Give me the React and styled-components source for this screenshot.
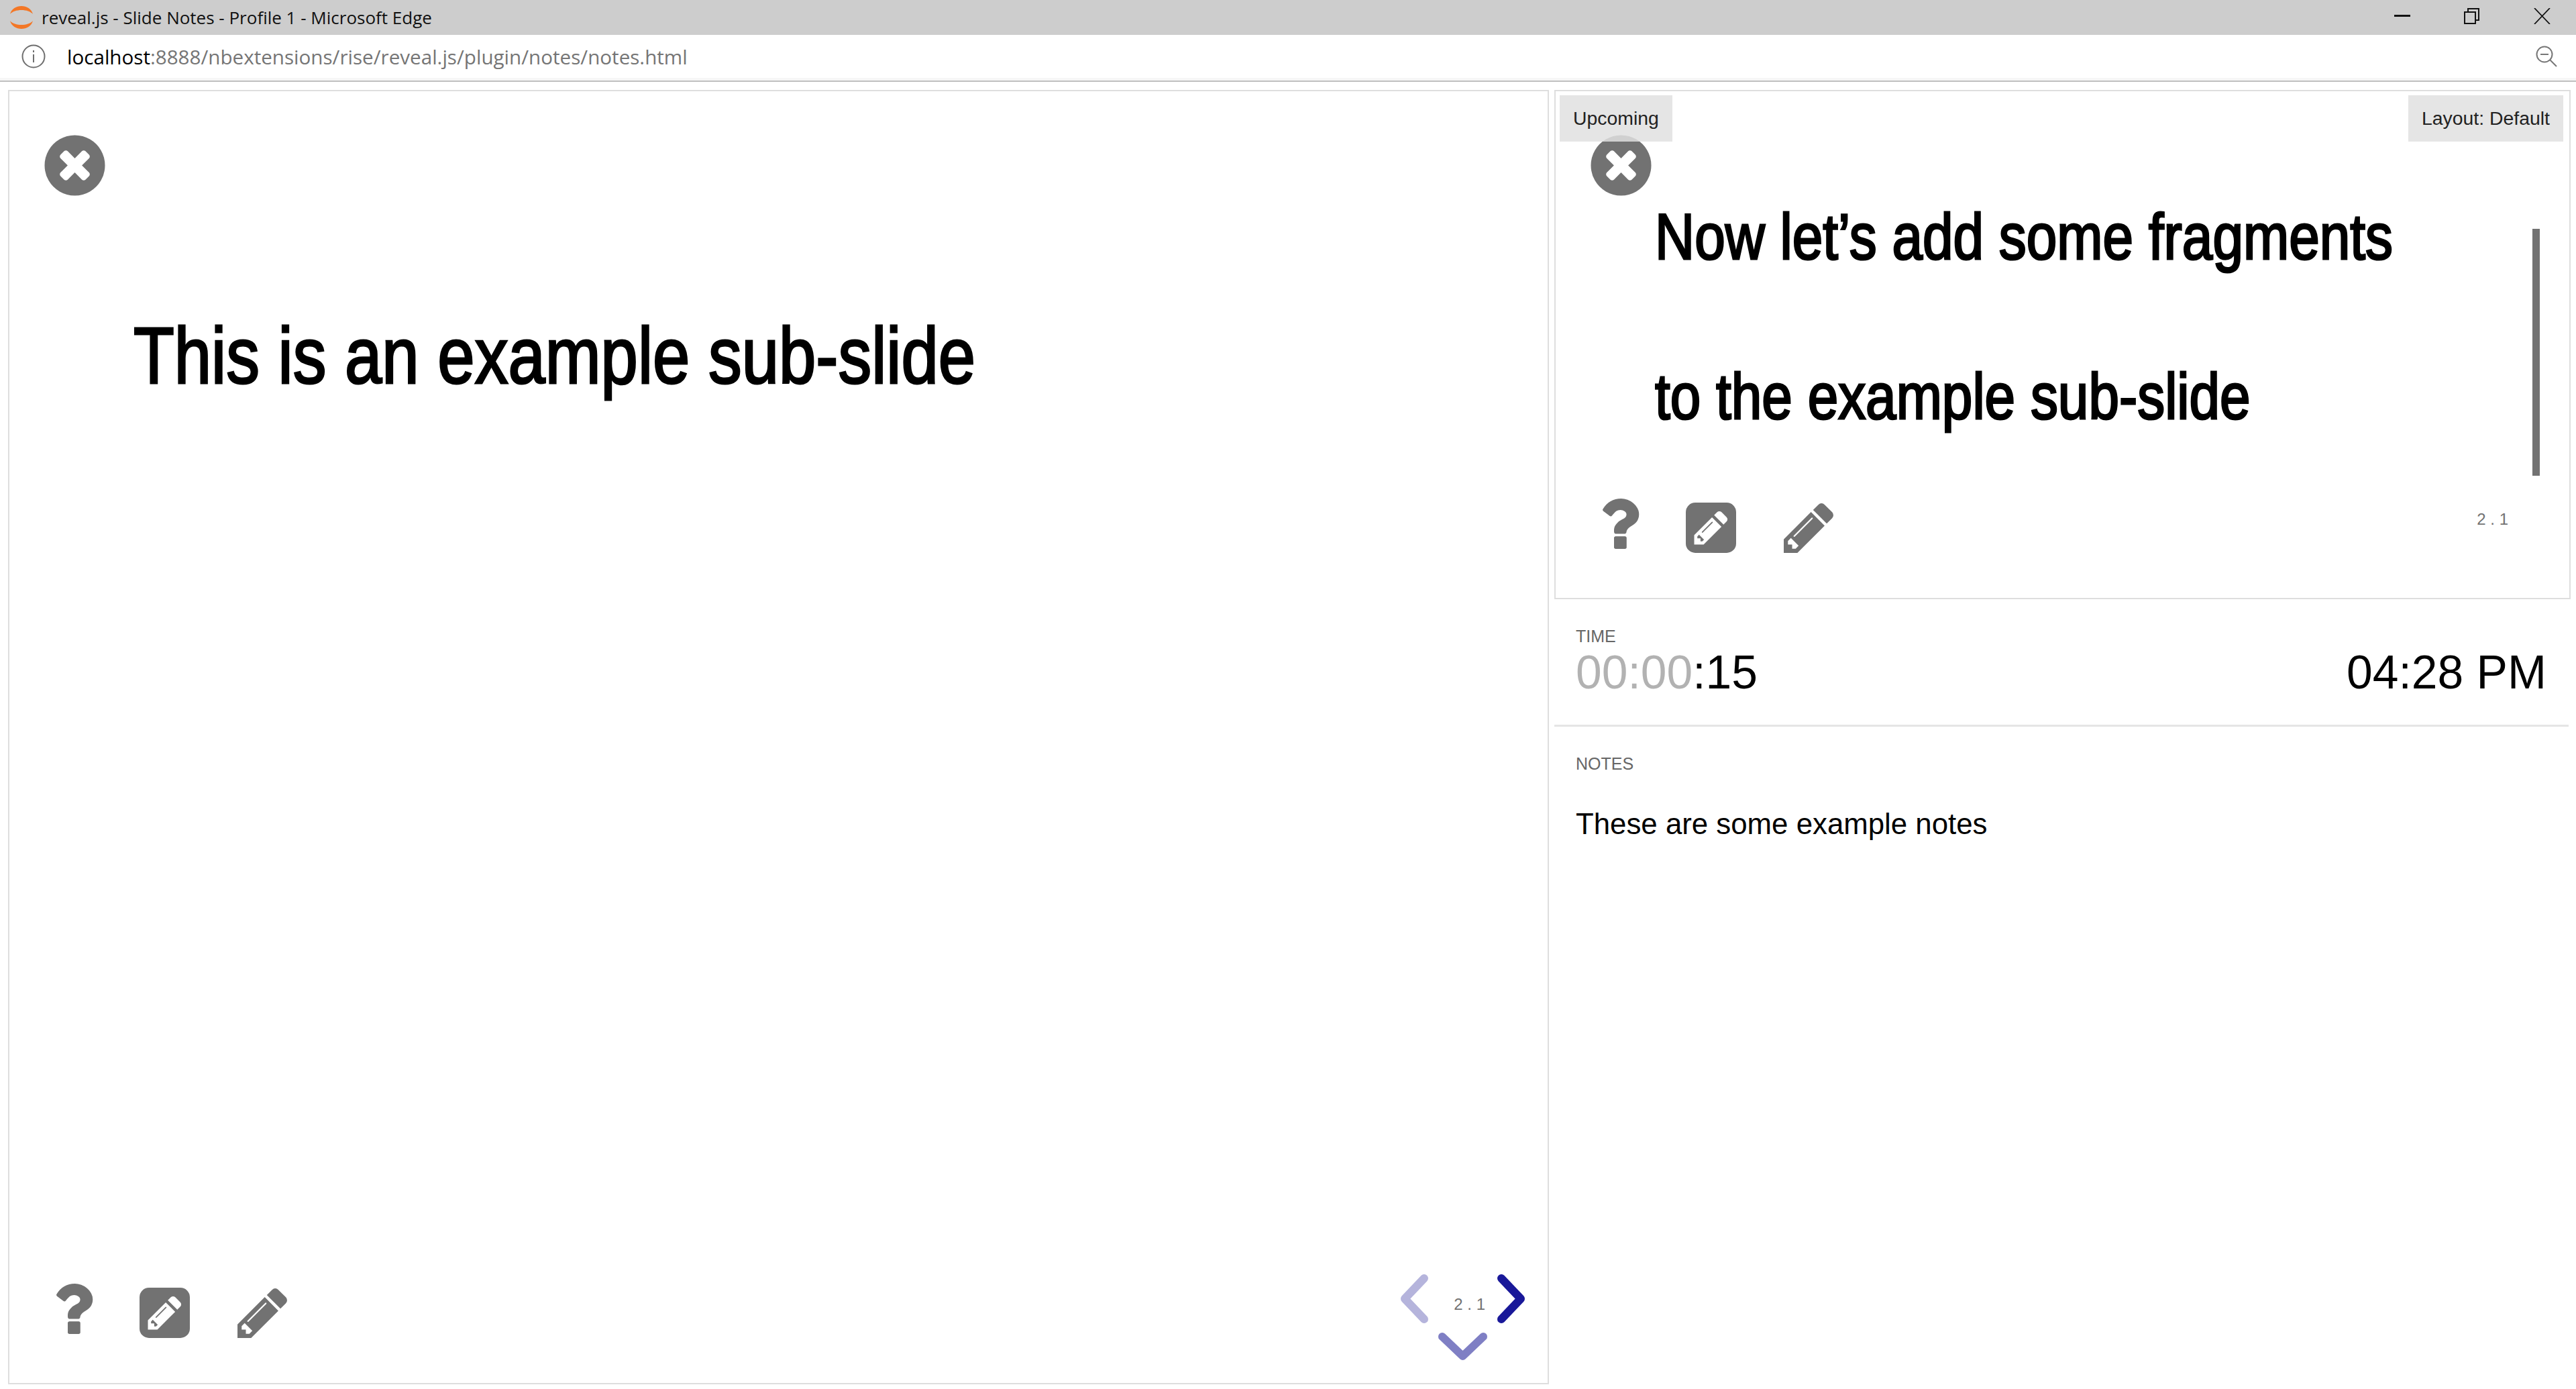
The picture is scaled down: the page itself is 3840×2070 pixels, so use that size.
import React from "react";
import styled, { createGlobalStyle } from "styled-components";

const GlobalStyle = createGlobalStyle`
  html, body {
    margin: 0;
    padding: 0;
    background: #ffffff;
  }
`;

// font awesome 4 glyph outlines
const CLOSE =
  "M1277 1122q0-26-19-45l-181-181 181-181q19-19 19-45 0-27-19-46l-90-90q-19-19-46-19-26 0-45 19l-181 181-181-181q-19-19-45-19-27 0-46 19l-90 90q-19 19-19 46 0 26 19 45l181 181-181 181q-19 19-19 45 0 27 19 46l90 90q19 19 46 19 26 0 45-19l181-181 181 181q19 19 45 19 27 0 46-19l90-90q19-19 19-46zm387-226q0 209-103 385.5t-279.5 279.5-385.5 103-385.5-103-279.5-279.5-103-385.5 103-385.5 279.5-279.5 385.5-103 385.5 103 279.5 279.5 103 385.5z";
const QUESTION =
  "M1088 1256v240q0 16-12 28t-28 12h-240q-16 0-28-12t-12-28v-240q0-16 12-28t28-12h240q16 0 28 12t12 28zm316-600q0 54-15.5 101t-35 76.5-55 59.5-57.5 43.5-61 35.5q-41 23-68.5 65t-27.5 67q0 17-12 32.5t-28 15.5h-240q-15 0-25.5-18.5t-10.5-37.5v-45q0-83 65-156.5t143-108.5q59-27 84-56t25-76q0-42-46.5-74t-107.5-32q-65 0-108 29-35 25-107 115-13 16-31 16-12 0-25-8l-164-125q-13-10-15.5-25t5.5-28q160-266 464-266 80 0 161 31t146 83 106 127.5 41 158.5z";
const SQUARE =
  "M404 980l152 152-52 52h-56v-96h-96v-56zm414-390q14 13-3 30l-291 291q-17 17-30 3-14-13 3-30l291-291q17-17 30-3zm-274 690l544-544-288-288-544 544v288h288zm608-608l92-92q28-28 28-68t-28-68l-152-152q-28-28-68-28t-68 28l-92 92zm384-384v960q0 119-84.5 203.5t-203.5 84.5h-960q-119 0-203.5-84.5t-84.5-203.5v-960q0-119 84.5-203.5t203.5-84.5h960q119 0 203.5 84.5t84.5 203.5z";
const PENCIL =
  "M363 1408l91-91-235-235-91 91v107h128v128h107zm523-928q0-22-22-22-10 0-17 7l-542 542q-7 7-7 17 0 22 22 22 10 0 17-7l542-542q7-7 7-17zm-54-192l416 416-832 832h-416v-416zm683 96q0 53-37 90l-166 166-416-416 166-165q36-38 90-38 53 0 91 38l235 234q37 39 37 91z";

const Glyph = ({ d, box, size }) => (
  <svg width={size} height={size} viewBox={box} fill="#727272" style={{ display: "block", flex: "none" }}>
    <path d={d} />
  </svg>
);

function SlideOverlay({ number }) {
  return (
    <>
      <CloseButton>
        <Glyph d={CLOSE} box="0 0 1792 1792" size={105} />
      </CloseButton>
      <ToolRow>
        <QuestionSlot>
          <Glyph d={QUESTION} box="0 0 1792 1792" size={105} />
        </QuestionSlot>
        <Glyph d={SQUARE} box="0 0 1536 1536" size={75} />
        <Glyph d={PENCIL} box="0 0 1536 1536" size={75} />
      </ToolRow>
      <SlideNumber>{number}</SlideNumber>
    </>
  );
}

export default function App() {
  return (
    <Page>
      <GlobalStyle />
      <TitleBar>
        <AppTitle>
          <svg width="36" height="36" viewBox="0 0 36 36">
            <path d="M1 13C5-3 31-3 35 13 28 5 8 5 1 13Z" fill="#f37726" />
            <path d="M1 23C5 39 31 39 35 23 28 31 8 31 1 23Z" fill="#f37726" />
          </svg>
          reveal.js - Slide Notes - Profile 1 - Microsoft Edge
        </AppTitle>
        <WindowControls>
          <svg width="24" height="24" viewBox="0 0 24 24">
            <path d="M0 11.5H24" stroke="#111" strokeWidth="3" fill="none" />
          </svg>
          <svg width="24" height="24" viewBox="0 0 24 24">
            <path d="M6 6V1H22V18H17M1 6H17V23H1Z" stroke="#111" strokeWidth="2" fill="none" />
          </svg>
          <svg width="25" height="24" viewBox="0 0 25 24">
            <path d="M1 0L24 24M24 0L1 24" stroke="#111" strokeWidth="1.8" fill="none" />
          </svg>
        </WindowControls>
      </TitleBar>
      <AddressBar>
        <svg width="36" height="36" viewBox="0 0 36 36">
          <circle cx="18" cy="18" r="16.5" fill="none" stroke="#6f6f6f" strokeWidth="2" />
          <path d="M18 15V27M18 9V12" stroke="#6f6f6f" strokeWidth="2" fill="none" />
        </svg>
        <Url>
          localhost<UrlRest>:8888/nbextensions/rise/reveal.js/plugin/notes/notes.html</UrlRest>
        </Url>
        <svg width="32" height="32" viewBox="0 0 32 32">
          <circle cx="13" cy="13" r="11.5" fill="none" stroke="#777" strokeWidth="2" />
          <path d="M7 13H19M21 21L31 31" stroke="#777" strokeWidth="2" fill="none" />
        </svg>
      </AddressBar>
      <Workspace>
        <CurrentSlide>
          <SlideOverlay number="2 . 1" />
          <CurrentHeading>This is an example sub-slide</CurrentHeading>
          <NavArrows>
            <svg width="200" height="145" viewBox="0 0 200 145">
              <path d="M43 15L14 45.5L43 76" stroke="#b5b4dc" />
              <path d="M158 15L187 45.5L158 76" stroke="#191899" />
              <path d="M70 102L100.5 131L131 102" stroke="#7f7fc4" />
            </svg>
          </NavArrows>
        </CurrentSlide>
        <SidePanel>
          <UpcomingSlide>
            <SlideOverlay number="2 . 1" />
            <CornerLabels>
              <CornerLabel>Upcoming</CornerLabel>
              <CornerLabel>Layout: Default</CornerLabel>
            </CornerLabels>
            <UpcomingHeading>
              Now let’s add some fragments
              <br />
              to the example sub-slide
            </UpcomingHeading>
            <ScrollBar />
          </UpcomingSlide>
          <TimeSection>
            <SectionLabel>TIME</SectionLabel>
            <TimeRow>
              <span>
                <Muted>00:00</Muted>:15
              </span>
              <span>04:28 PM</span>
            </TimeRow>
          </TimeSection>
          <NotesSection>
            <SectionLabel>NOTES</SectionLabel>
            <NotesText>These are some example notes</NotesText>
          </NotesSection>
        </SidePanel>
      </Workspace>
    </Page>
  );
}

const Page = styled.div`
  width: 3840px;
  height: 2070px;
  display: flex;
  flex-direction: column;
  overflow: hidden;
  background: #ffffff;
  font-family: "Liberation Sans", Arial, sans-serif;
`;

const TitleBar = styled.div`
  height: 52px;
  flex: none;
  box-sizing: border-box;
  display: flex;
  align-items: center;
  justify-content: space-between;
  padding: 0 38px 0 14px;
  background: #cdcdcd;
`;

const AppTitle = styled.div`
  display: flex;
  align-items: center;
  gap: 12px;
  font-family: "Open Sans", sans-serif;
  font-size: 26px;
  color: #111111;
`;

const WindowControls = styled.div`
  align-self: flex-start;
  display: flex;
  gap: 80px;
  padding-top: 12px;
`;

const AddressBar = styled.div`
  height: 70px;
  flex: none;
  box-sizing: border-box;
  display: flex;
  align-items: center;
  gap: 32px;
  padding: 0 28px 4px 32px;
  background: #ffffff;
  border-bottom: 2px solid #c0c0c0;
  box-shadow: inset 0 -4px 0 #f6f6f6;
`;

const Url = styled.div`
  flex: 1;
  font-family: "Open Sans", sans-serif;
  font-size: 29.6px;
  color: #000000;
`;

const UrlRest = styled.span`
  color: #757575;
`;

const Workspace = styled.div`
  flex: 1;
  display: flex;
  gap: 8px;
  padding: 12px 8px 7px 12px;
  min-height: 0;
`;

const Slide = styled.div`
  position: relative;
  box-sizing: border-box;
  border: 2px solid #dedede;
  background: #ffffff;
  color: #000000;
`;

const CurrentSlide = styled(Slide)`
  width: 2297px;
  flex: none;
  padding: 335px 0 0 185px;
`;

const Heading = styled.h1`
  margin: 0;
  font-weight: 400;
  white-space: nowrap;
  transform-origin: left center;
  -webkit-text-stroke: 3px #000000;
`;

const CurrentHeading = styled(Heading)`
  font-size: 118px;
  line-height: 1;
  transform: scaleX(0.843);
`;

const CloseButton = styled.div`
  position: absolute;
  left: 45px;
  top: 58px;
`;

const ToolRow = styled.div`
  position: absolute;
  left: 69px;
  bottom: 67px;
  display: flex;
  align-items: flex-end;
  gap: 71px;
`;

const QuestionSlot = styled.div`
  width: 54px;
  height: 75px;
  margin-left: -2px;
  margin-right: 2px;
  display: flex;
  justify-content: center;
  align-items: flex-end;
  svg {
    margin-bottom: -9px;
  }
`;

const SlideNumber = styled.div`
  position: absolute;
  right: ${(p) => p.$right || 93}px;
  bottom: 105px;
  font-size: 24px;
  line-height: 25px;
  color: #727272;
`;

const NavArrows = styled.div`
  position: absolute;
  right: 27px;
  bottom: 26px;
  line-height: 0;
  path {
    fill: none;
    stroke-width: 12px;
    stroke-linecap: round;
    stroke-linejoin: round;
  }
`;

const SidePanel = styled.div`
  flex: 1;
  display: flex;
  flex-direction: column;
  min-width: 0;
`;

const UpcomingSlide = styled(Slide)`
  height: 759px;
  flex: none;
  padding: 98px 0 0 148px;
  ${SlideNumber} {
    right: 91px;
  }
`;

const CornerLabels = styled.div`
  position: absolute;
  top: 6px;
  left: 6px;
  right: 9px;
  display: flex;
  justify-content: space-between;
`;

const CornerLabel = styled.div`
  padding: 20px;
  font-size: 28.4px;
  line-height: 29px;
  color: #222222;
  background: rgba(224, 224, 224, 0.85);
`;

const UpcomingHeading = styled(Heading)`
  font-size: 96px;
  line-height: 238px;
  transform: scaleX(0.853);
`;

const ScrollBar = styled.div`
  position: absolute;
  top: 205px;
  right: 44px;
  width: 11px;
  height: 368px;
  background: #727272;
`;

const TimeSection = styled.section`
  height: 190px;
  flex: none;
  box-sizing: border-box;
  padding: 43px 33px 0 32px;
  margin-right: 3px;
  border-bottom: 3px solid #e5e5e5;
`;

const SectionLabel = styled.div`
  font-size: 25px;
  line-height: 25px;
  color: #666666;
`;

const TimeRow = styled.div`
  display: flex;
  justify-content: space-between;
  margin-top: 0;
  font-size: 69.6px;
  line-height: 82px;
  color: #000000;
`;

const Muted = styled.span`
  color: #b2b2b2;
`;

const NotesSection = styled.section`
  flex: 1;
  padding: 43px 33px 0 32px;
`;

const NotesText = styled.div`
  margin-top: 47px;
  font-size: 43.8px;
  line-height: 60px;
  color: #000000;
`;
